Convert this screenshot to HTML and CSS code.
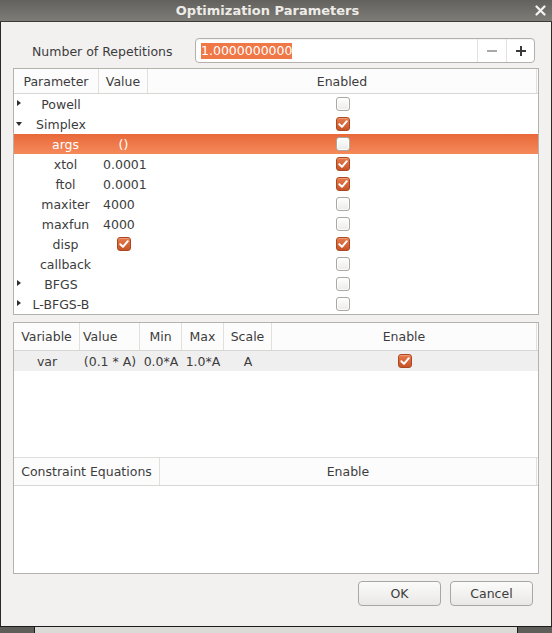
FILE: index.html
```html
<!DOCTYPE html>
<html>
<head>
<meta charset="utf-8">
<link rel="stylesheet" href="styles.css">
</head>
<body>
<div class="window">
  <div class="titlebar">
    <span class="title">Optimization Parameters</span>
    <svg class="close" width="11" height="11" viewBox="0 0 11 11"><path d="M1.5 1.5 L9.5 9.5 M9.5 1.5 L1.5 9.5" stroke="#f4f4f2" stroke-width="2.2" stroke-linecap="round"/></svg>
  </div>
  <div class="content">
    <div class="reprow">
      <span class="replabel">Number of Repetitions</span>
      <div class="spin">
        <div class="spin-entry"><span class="sel">1.0000000000</span></div>
        <div class="spin-btn"><svg width="12" height="12" viewBox="0 0 12 12"><path d="M1 6 H11" stroke="#a9a8a5" stroke-width="2"/></svg></div>
        <div class="spin-btn"><svg width="12" height="12" viewBox="0 0 12 12"><path d="M1 6 H11 M6 1 V11" stroke="#3a3a3a" stroke-width="2"/></svg></div>
      </div>
    </div>

    <div class="frame tree">
      <div class="thead tcols">
        <div class="th">Parameter</div>
        <div class="th">Value</div>
        <div class="th last">Enabled</div>
      </div>
      <div class="trow tcols">
        <div class="pcell top"><span class="exp right"></span>Powell</div>
        <div class="vcell"></div>
        <div class="ecell"><span class="cb"></span></div>
      </div>
      <div class="trow tcols">
        <div class="pcell top"><span class="exp down"></span>Simplex</div>
        <div class="vcell"></div>
        <div class="ecell"><span class="cb on"><svg width="12" height="12" viewBox="0 0 12 12"><path d="M2.3 6.2 L5 8.8 L9.8 3.2" fill="none" stroke="#fff" stroke-width="2" stroke-linecap="round" stroke-linejoin="round"/></svg></span></div>
      </div>
      <div class="trow tcols selected">
        <div class="pcell child">args</div>
        <div class="vcell center">()</div>
        <div class="ecell"><span class="cb"></span></div>
      </div>
      <div class="trow tcols">
        <div class="pcell child">xtol</div>
        <div class="vcell">0.0001</div>
        <div class="ecell"><span class="cb on"><svg width="12" height="12" viewBox="0 0 12 12"><path d="M2.3 6.2 L5 8.8 L9.8 3.2" fill="none" stroke="#fff" stroke-width="2" stroke-linecap="round" stroke-linejoin="round"/></svg></span></div>
      </div>
      <div class="trow tcols">
        <div class="pcell child">ftol</div>
        <div class="vcell">0.0001</div>
        <div class="ecell"><span class="cb on"><svg width="12" height="12" viewBox="0 0 12 12"><path d="M2.3 6.2 L5 8.8 L9.8 3.2" fill="none" stroke="#fff" stroke-width="2" stroke-linecap="round" stroke-linejoin="round"/></svg></span></div>
      </div>
      <div class="trow tcols">
        <div class="pcell child">maxiter</div>
        <div class="vcell">4000</div>
        <div class="ecell"><span class="cb"></span></div>
      </div>
      <div class="trow tcols">
        <div class="pcell child">maxfun</div>
        <div class="vcell">4000</div>
        <div class="ecell"><span class="cb"></span></div>
      </div>
      <div class="trow tcols">
        <div class="pcell child">disp</div>
        <div class="vcell center"><span class="cb on"><svg width="12" height="12" viewBox="0 0 12 12"><path d="M2.3 6.2 L5 8.8 L9.8 3.2" fill="none" stroke="#fff" stroke-width="2" stroke-linecap="round" stroke-linejoin="round"/></svg></span></div>
        <div class="ecell"><span class="cb on"><svg width="12" height="12" viewBox="0 0 12 12"><path d="M2.3 6.2 L5 8.8 L9.8 3.2" fill="none" stroke="#fff" stroke-width="2" stroke-linecap="round" stroke-linejoin="round"/></svg></span></div>
      </div>
      <div class="trow tcols">
        <div class="pcell child">callback</div>
        <div class="vcell"></div>
        <div class="ecell"><span class="cb"></span></div>
      </div>
      <div class="trow tcols">
        <div class="pcell top"><span class="exp right"></span>BFGS</div>
        <div class="vcell"></div>
        <div class="ecell"><span class="cb"></span></div>
      </div>
      <div class="trow tcols">
        <div class="pcell top"><span class="exp right"></span>L-BFGS-B</div>
        <div class="vcell"></div>
        <div class="ecell"><span class="cb"></span></div>
      </div>
    </div>

    <div class="frame vars">
      <div class="varsec">
        <div class="vhead vcols">
          <div class="th">Variable</div>
          <div class="th valhead">Value</div>
          <div class="th">Min</div>
          <div class="th">Max</div>
          <div class="th">Scale</div>
          <div class="th last">Enable</div>
        </div>
        <div class="vrow vcols">
          <div class="c">var</div>
          <div class="c">(0.1 * A)</div>
          <div class="c">0.0*A</div>
          <div class="c">1.0*A</div>
          <div class="c">A</div>
          <div class="c"><span class="cb on"><svg width="12" height="12" viewBox="0 0 12 12"><path d="M2.3 6.2 L5 8.8 L9.8 3.2" fill="none" stroke="#fff" stroke-width="2" stroke-linecap="round" stroke-linejoin="round"/></svg></span></div>
        </div>
      </div>
      <div class="consec">
        <div class="chead">
          <div class="th">Constraint Equations</div>
          <div class="th last">Enable</div>
        </div>
      </div>
    </div>

    <div class="buttons">
      <div class="btn">OK</div>
      <div class="btn">Cancel</div>
    </div>
  </div>
  <div class="bottombar">
    <div class="bseg dark left"></div>
    <div class="bseg light"></div>
    <div class="bseg dark"></div>
  </div>
</div>
</body>
</html>
```

FILE: styles.css
```css
* { box-sizing: border-box; }

body {
  margin: 0;
  font-family: "DejaVu Sans", sans-serif;
  font-size: 12.5px;
  color: #3c3c3c;
}

.window {
  width: 552px;
  height: 633px;
  display: flex;
  flex-direction: column;
  background: #f2f1f0;
  border-left: 1px solid #2a2a28;
  border-right: 1px solid #2a2a28;
}

.titlebar {
  flex: none;
  height: 22px;
  display: flex;
  align-items: center;
  background: linear-gradient(#62615d, #7d7c77);
  border-bottom: 1px solid #3b3a37;
  margin: 0 -1px;
}

.title {
  flex: 1;
  text-align: center;
  font-weight: bold;
  font-size: 13px;
  color: #eeece8;
  padding-left: 4px;
}

.close {
  flex: none;
  margin: 0 6px 0 4px;
}

.content {
  flex: 1;
  display: flex;
  flex-direction: column;
  padding: 16px 12px 0 12px;
}

.reprow {
  flex: none;
  height: 25px;
  display: flex;
  align-items: center;
}

.replabel {
  padding-left: 19px;
  padding-top: 1px;
}

.spin {
  margin-left: auto;
  margin-right: 4px;
  width: 340px;
  height: 25px;
  display: flex;
  background: #ffffff;
  border: 1px solid #b2b0ab;
  border-radius: 4px;
  box-shadow: inset 0 1px 1px rgba(0,0,0,0.05);
}

.spin-entry {
  flex: 1;
  display: flex;
  align-items: center;
  padding-left: 5px;
}

.sel {
  background: #f07746;
  color: #ffffff;
  line-height: 16px;
  padding: 0 0 0 0;
}

.spin-btn {
  flex: none;
  width: 29px;
  display: flex;
  align-items: center;
  justify-content: center;
  border-left: 1px solid #e3e1dd;
}

.spin-btn:last-child { width: 28px; }

.frame {
  background: #ffffff;
  border: 1px solid #b4b2ad;
}

.tree {
  flex: none;
  margin-top: 5px;
  height: 247px;
}

.tcols {
  display: grid;
  grid-template-columns: 85px 49px 1fr;
}

.thead {
  height: 25px;
  background: #fcfcfc;
  border-bottom: 1px solid #d9d7d3;
}

.th {
  display: flex;
  align-items: center;
  justify-content: center;
  border-right: 1px solid #e2e0dc;
  color: #3c3c3c;
  white-space: nowrap;
}

.th.last { border-right: 1px solid #e2e0dc; margin-right: 1px; }

.trow {
  height: 20px;
  align-items: center;
}

.trow > div {
  height: 20px;
  display: flex;
  align-items: center;
  white-space: nowrap;
}

.pcell {
  justify-content: center;
  position: relative;
}

.pcell.top { padding-left: 9px; }
.pcell.child { padding-left: 18px; }

.exp {
  position: absolute;
  width: 0;
  height: 0;
}

.exp.right {
  left: 3px;
  top: 6px;
  border-left: 4px solid #2e2e2e;
  border-top: 3.5px solid transparent;
  border-bottom: 3.5px solid transparent;
}

.exp.down {
  left: 2px;
  top: 8px;
  border-top: 4px solid #2e2e2e;
  border-left: 3.5px solid transparent;
  border-right: 3.5px solid transparent;
}

.vcell { padding-left: 4px; }
.vcell.center { justify-content: center; padding-left: 0; }

.ecell { justify-content: center; }

.selected {
  background: linear-gradient(#e8683a, #f58a5b);
  color: #ffffff;
}

.cb {
  width: 14px;
  height: 14px;
  border-radius: 3px;
  border: 1px solid #aaa8a3;
  background: linear-gradient(#ffffff, #ebeae8);
  box-shadow: inset 0 0 0 1px rgba(255,255,255,0.8);
  display: flex;
  align-items: center;
  justify-content: center;
}

.cb.on {
  border-color: #ab4820;
  background: linear-gradient(#e77a4b, #c8542a);
  box-shadow: inset 0 1px 0 rgba(255,255,255,0.25);
}

.vars {
  flex: 1;
  margin-top: 7px;
  display: flex;
  flex-direction: column;
}

.varsec {
  flex: none;
  height: 134px;
}

.vcols {
  display: grid;
  grid-template-columns: 66px 60px 42px 42px 48px 1fr;
}

.vhead {
  height: 28px;
  background: #fcfcfc;
  border-bottom: 1px solid #d9d7d3;
}

.th.valhead { justify-content: flex-start; padding-left: 3px; }

.vrow {
  height: 20px;
  background: #efefef;
}

.vrow .c {
  display: flex;
  align-items: center;
  justify-content: center;
  white-space: nowrap;
}

.consec {
  flex: 1;
  border-top: 1px solid #e0dedb;
}

.chead {
  height: 28px;
  display: grid;
  grid-template-columns: 146px 1fr;
  background: #fcfcfc;
  border-bottom: 1px solid #d9d7d3;
}

.buttons {
  flex: none;
  display: flex;
  justify-content: flex-end;
  gap: 9px;
  margin: 7px 0 20px 0;
  padding-right: 6px;
  height: 25px;
}

.btn {
  width: 83px;
  height: 25px;
  display: flex;
  align-items: center;
  justify-content: center;
  border: 1px solid #a9a7a2;
  border-radius: 4px;
  background: linear-gradient(#fbfbfa, #e9e8e6);
  color: #3c3c3c;
}

.bottombar {
  flex: none;
  height: 7px;
  display: flex;
  border-top: 1px solid #1c1c1b;
  margin: 0 -1px;
}

.bseg { height: 6px; }
.bseg.dark { width: 34px; background: #5f5e5b; }
.bseg.light {
  flex: 1;
  background: #dcdad6;
  border-left: 1px solid #1c1c1b;
  border-right: 1px solid #1c1c1b;
}
```
